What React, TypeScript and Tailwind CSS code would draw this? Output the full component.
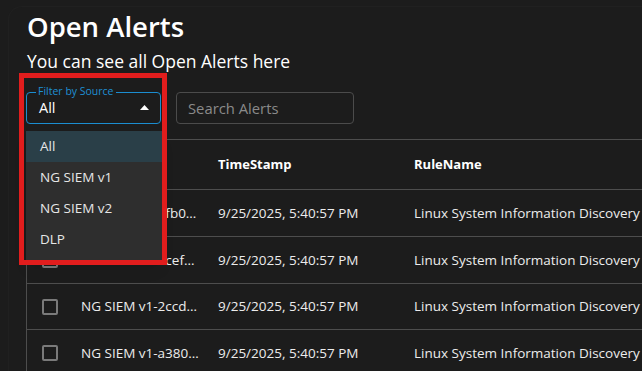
import React from "react";

const rows = [
  { src: "NG SIEM v1-3fb07e91a2c4", ts: "9/25/2025, 5:40:57 PM", rule: "Linux System Information Discovery", h: "h-[47px]" },
  { src: "NG SIEM v1-1cef0a7d93b2", ts: "9/25/2025, 5:40:57 PM", rule: "Linux System Information Discovery", h: "h-[47px]" },
  { src: "NG SIEM v1-2ccd41f8e0a6", ts: "9/25/2025, 5:40:57 PM", rule: "Linux System Information Discovery", h: "h-[46px]" },
  { src: "NG SIEM v1-a380c2d7b915", ts: "9/25/2025, 5:40:57 PM", rule: "Linux System Information Discovery", h: "h-[47px]" },
];

export default function App() {
  return (
    <div
      className="relative w-[642px] h-[371px] overflow-hidden bg-[#1c1c1c] text-white"
      style={{ fontFamily: '"Open Sans", "DejaVu Sans", sans-serif' }}
    >
      <div className="ml-[8px] mt-[6px] h-[400px] border-l border-t border-[#202020] rounded-tl-[14px] pt-[2px] pl-[17px]">
        <h1 className="pl-[1px] text-[27.5px] font-semibold leading-[36px]">Open Alerts</h1>
        <p className="pl-[1px] mt-[6px] text-[17.5px] leading-[20px]">You can see all Open Alerts here</p>

        <div className="mt-[21px] flex items-center gap-[15px]">
          <div className="relative w-[135px] h-[32px] rounded-[4px] border border-[#1b8dd0] flex items-center pl-[12px] pr-[12px]">
            <span className="absolute left-[9px] top-[-8px] px-[2px] bg-[#1c1c1c] text-[10.5px] leading-[12px] text-[#1e90d4]">
              Filter by Source
            </span>
            <span className="text-[14.5px] leading-[18px] text-white">All</span>
            <svg className="absolute left-[113px] top-[12px]" width="9" height="5" viewBox="0 0 9 5">
              <path d="M0 5 L4.5 0 L9 5 Z" fill="#ffffff" />
            </svg>
          </div>
          <div className="w-[178px] h-[32px] rounded-[4px] border border-[#4b4b4b] flex items-center pl-[11px]">
            <span className="text-[14.8px] leading-[18px] text-[#8a8a8a]">Search Alerts</span>
          </div>
        </div>

        <div className="mt-[15px] border-l border-t border-[#4d4d4d]">
          <div className="flex items-center h-[50px] border-b border-[#4d4d4d] text-[13px] font-bold">
            <div className="w-[54px] shrink-0" />
            <div className="w-[137px] shrink-0">Source</div>
            <div className="w-[196px] shrink-0">TimeStamp</div>
            <div className="whitespace-nowrap">RuleName</div>
          </div>
          {rows.map((r, i) => (
            <div key={i} className={`flex items-center ${r.h} border-b border-[#4d4d4d] text-[13.5px] font-medium text-[#ececec]`}>
              <div className="w-[54px] shrink-0 pl-[15px]">
                <div className="w-[16px] h-[16px] rounded-[2px] border-2 border-[#7a7a7a]" />
              </div>
              <div className="w-[137px] shrink-0 pr-[18px] truncate">{r.src}</div>
              <div className="w-[196px] shrink-0 whitespace-nowrap">{r.ts}</div>
              <div className="whitespace-nowrap">{r.rule}</div>
            </div>
          ))}
        </div>
      </div>

      {/* dropdown menu */}
      <div className="absolute left-[26px] top-[131px] w-[136px] h-[130px] bg-[#2e2e2e] text-[13.5px] font-medium text-[#e6e6e6] shadow-lg">
        <div className="h-[31px] flex items-center pl-[14px] bg-[#2a3f48]">All</div>
        <div className="h-[31px] flex items-center pl-[14px]">NG SIEM v1</div>
        <div className="h-[31px] flex items-center pl-[14px]">NG SIEM v2</div>
        <div className="h-[31px] flex items-center pl-[14px]">DLP</div>
      </div>

      {/* red annotation */}
      <div className="absolute left-[19px] top-[73px] w-[148px] h-[192px] border-[5px] border-[#e11d1d]" />
    </div>
  );
}
